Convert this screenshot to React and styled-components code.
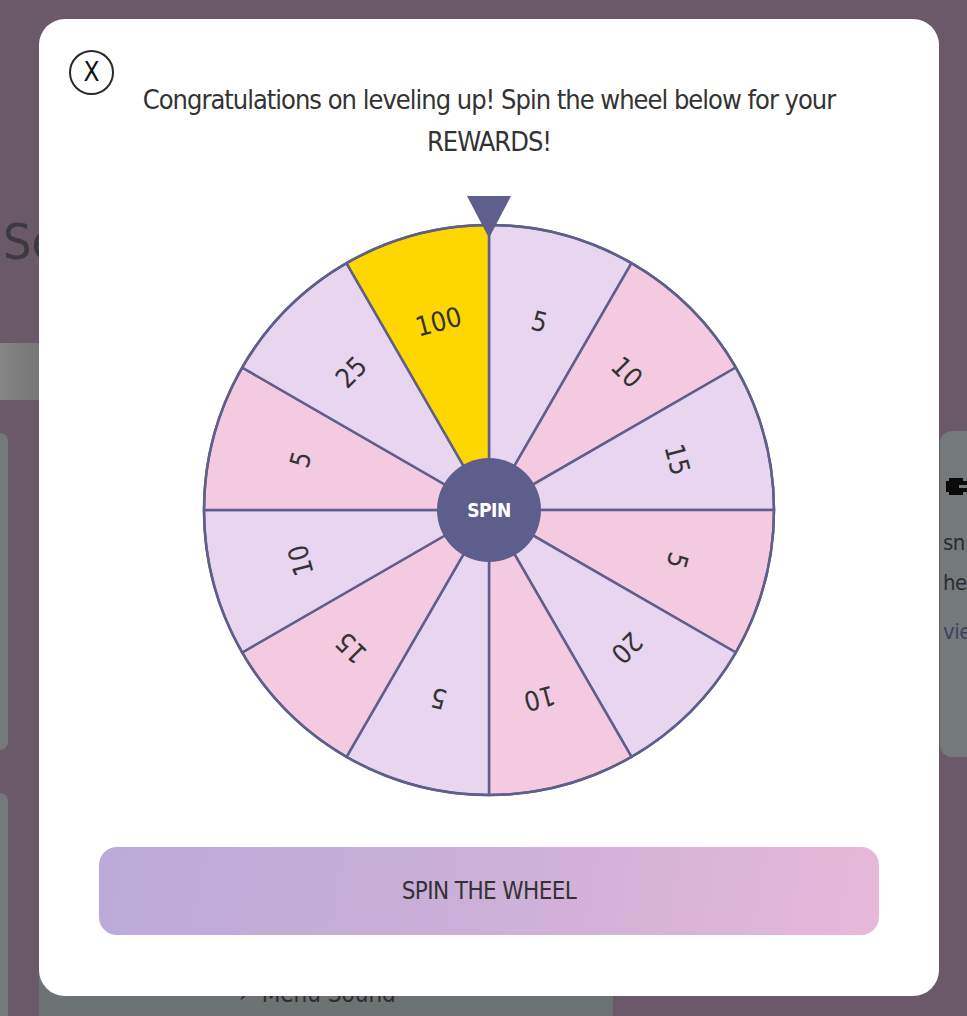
import React from "react";
import styled, { createGlobalStyle } from "styled-components";

const FONT = `"DejaVu Sans Condensed", "DejaVu Sans", sans-serif`;

const GlobalStyle = createGlobalStyle`
  html, body {
    margin: 0;
    padding: 0;
    background: #6a5a69;
    overflow: hidden;
  }
  body {
    font-family: ${FONT};
    font-stretch: condensed;
    width: 967px;
    height: 1016px;
  }
  * { box-sizing: border-box; }
`;

/* ---------- dimmed page behind the modal ---------- */
const Page = styled.div`
  width: 967px;
  height: 1016px;
  display: flex;
  flex-direction: column;
  overflow: hidden;
  background: #6a5a69;
  & > * { flex-shrink: 0; }
`;

const PageTitle = styled.h1`
  margin: 212px 0 0 3px;
  font-family: ${FONT};
  font-weight: 400;
  font-size: 50px;
  line-height: 60px;
  color: #3c3a3e;
`;

const TabBar = styled.div`
  margin-top: 71px;
  height: 57px;
  width: 880px;
  border-radius: 0 12px 12px 0;
  background: linear-gradient(90deg, #858585 0%, #757575 5%, #747474 100%);
`;

const CardRow = styled.div`
  margin-top: 31px;
  display: flex;
  justify-content: space-between;
  align-items: flex-start;
`;

const SideCard = styled.div`
  width: ${(p) => p.$w}px;
  height: ${(p) => p.$h}px;
  margin-top: ${(p) => p.$top || 0}px;
  background: #74797a;
  border-radius: ${(p) => (p.$side === "left" ? "0 12px 12px 0" : "12px 0 0 12px")};
  overflow: hidden;
`;

const RightCardBody = styled.div`
  padding: 42px 0 0 3px;
  display: flex;
  flex-direction: column;
  font-family: ${FONT};
  font-size: 22px;
  letter-spacing: -0.5px;
  white-space: nowrap;
`;

const CardLine = styled.div`
  height: ${(p) => p.$h}px;
  line-height: ${(p) => p.$h}px;
  margin-top: ${(p) => p.$gap || 0}px;
  color: ${(p) => p.$color || "#2b2c2e"};
`;

const BottomRow = styled.div`
  margin-top: 36px;
  display: flex;
  gap: 31px;
  align-items: flex-start;
`;

const MenuCard = styled.div`
  width: 574px;
  height: 240px;
  margin-top: 6px;
  background: #6d7273;
  border-radius: 12px 12px 0 0;
  display: flex;
  flex-direction: column;
  justify-content: flex-end;
  padding: 0 0 31px 200px;
`;

const MenuItem = styled.div`
  display: flex;
  align-items: center;
  gap: 14px;
  font-family: ${FONT};
  font-size: 24px;
  color: #2c2e30;
`;

/* ---------- modal ---------- */
const Overlay = styled.div`
  position: fixed;
  inset: 0;
  display: flex;
  align-items: flex-start;
  padding: 19px 0 0 39px;
`;

const Modal = styled.div`
  position: relative;
  width: 900px;
  height: 977px;
  background: #ffffff;
  border-radius: 26px;
  display: flex;
  flex-direction: column;
  align-items: center;
  padding: 60px 0 61px;
`;

const CloseButton = styled.button`
  position: absolute;
  top: 31px;
  left: 30px;
  width: 45px;
  height: 45px;
  border-radius: 50%;
  border: 2.5px solid #2a2a2a;
  background: #fff;
  display: flex;
  align-items: center;
  justify-content: center;
  padding: 0 0 1px;
  font-family: ${FONT};
  font-stretch: condensed;
  font-size: 26px;
  color: #111;
  cursor: pointer;
`;

const Title = styled.h2`
  margin: 0;
  font-family: ${FONT};
  font-stretch: condensed;
  font-weight: 400;
  font-size: 27px;
  letter-spacing: -1px;
  line-height: 42px;
  color: #333333;
  text-align: center;
`;

const WheelWrap = styled.div`
  margin-top: 27px;
  width: 580px;
  height: 610px;
`;

const SpinButton = styled.button`
  margin-top: 47px;
  width: 780px;
  height: 88px;
  border: none;
  border-radius: 18px;
  background: linear-gradient(100deg, #bbaad9 0%, #c7aed8 40%, #e7b8d8 100%);
  font-family: ${FONT};
  font-stretch: condensed;
  font-size: 24px;
  letter-spacing: -0.6px;
  color: #333333;
  cursor: pointer;
`;

const CX = 290;
const CY = 320;
const R = 285;
const STROKE = "#5e5f8b";
const values = [5, 10, 15, 5, 20, 10, 5, 15, 10, 5, 25, 100];

const pt = (deg, r) => {
  const a = (deg * Math.PI) / 180;
  return [CX + r * Math.sin(a), CY - r * Math.cos(a)];
};

function Wheel() {
  return (
    <svg width="580" height="610" viewBox="0 0 580 610">
      {values.map((v, i) => {
        const a0 = i * 30;
        const a1 = a0 + 30;
        const [x0, y0] = pt(a0, R);
        const [x1, y1] = pt(a1, R);
        const fill = i === 11 ? "#ffd700" : i % 2 === 0 ? "#e8d5f0" : "#f4cae0";
        return (
          <path
            key={"s" + i}
            d={`M ${CX} ${CY} L ${x0} ${y0} A ${R} ${R} 0 0 1 ${x1} ${y1} Z`}
            fill={fill}
            stroke={STROKE}
            strokeWidth="2.5"
            strokeLinejoin="round"
          />
        );
      })}
      {values.map((v, i) => {
        const mid = i * 30 + 15;
        return (
          <text
            key={"t" + i}
            x={CX}
            y={CY - 195}
            transform={`rotate(${mid} ${CX} ${CY})`}
            textAnchor="middle"
            dominantBaseline="central"
            fontFamily={FONT}
            fontStretch="condensed"
            fontSize="27"
            fill="#333333"
          >
            {v}
          </text>
        );
      })}
      <circle cx={CX} cy={CY} r={R} fill="none" stroke={STROKE} strokeWidth="2.5" />
      <circle cx={CX} cy={CY} r="52" fill="#5d5e8b" />
      <text
        x={CX}
        y={CY}
        textAnchor="middle"
        dominantBaseline="central"
        fontFamily={FONT}
        fontStretch="condensed"
        fontWeight="700"
        fontSize="19"
        letterSpacing="-0.5"
        fill="#ffffff"
      >
        SPIN
      </text>
      <polygon points="268,6 312,6 290,48" fill="#5e5f8c" />
    </svg>
  );
}

function BlockIcon() {
  return (
    <svg width="28" height="26" viewBox="0 0 28 26" style={{ verticalAlign: "middle" }}>
      <path d="M6 2h14v3h4v4h-8v3h8v4h-4v3h-14v-3h-3v-11h3z" fill="#0b0b0b" />
    </svg>
  );
}

export default function App() {
  return (
    <>
      <GlobalStyle />
      <Page>
        <PageTitle>Settings</PageTitle>
        <TabBar />
        <CardRow>
          <SideCard $side="left" $w={8} $h={317} $top={2} />
          <SideCard $side="right" $w={27} $h={326}>
            <RightCardBody>
              <CardLine $h={30}>
                <BlockIcon />
              </CardLine>
              <CardLine $h={40} $gap={20}>
                sn
              </CardLine>
              <CardLine $h={40}>he</CardLine>
              <CardLine $h={58} $color="#3d4263">
                vie
              </CardLine>
            </RightCardBody>
          </SideCard>
        </CardRow>
        <BottomRow>
          <SideCard $side="left" $w={8} $h={300} />
          <MenuCard>
            <MenuItem>
              <span>›</span>
              <span>Menu Sound</span>
            </MenuItem>
          </MenuCard>
        </BottomRow>
      </Page>

      <Overlay>
        <Modal>
          <CloseButton aria-label="Close">X</CloseButton>
          <Title>
            Congratulations on leveling up! Spin the wheel below for your
            <br />
            REWARDS!
          </Title>
          <WheelWrap>
            <Wheel />
          </WheelWrap>
          <SpinButton>SPIN THE WHEEL</SpinButton>
        </Modal>
      </Overlay>
    </>
  );
}
